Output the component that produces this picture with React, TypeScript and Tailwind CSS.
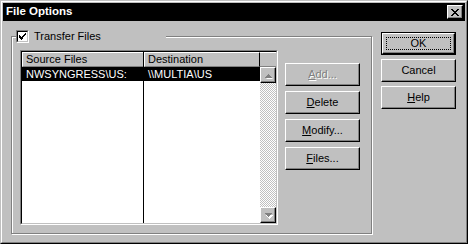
import React from "react";

// Win95-style "File Options" dialog

const raised =
  "border border-t-white border-l-white border-r-black border-b-black shadow-[inset_-1px_-1px_0_#808080]";

interface ButtonProps {
  children: React.ReactNode;
  isDefault?: boolean;
  disabled?: boolean;
}

const PushButton = ({ children, isDefault, disabled }: ButtonProps) => {
  if (isDefault) {
    return (
      <div className="w-[75px] h-[23px] border border-black">
        <div className={`h-full ${raised} p-[3px]`}>
          <div className="h-full border border-dotted border-black flex items-center justify-center">
            {children}
          </div>
        </div>
      </div>
    );
  }
  return (
    <div
      className={`w-[75px] h-[23px] ${raised} flex items-center justify-center ${
        disabled ? "text-[#808080] [text-shadow:1px_1px_0_#fff]" : ""
      }`}
    >
      {children}
    </div>
  );
};

const Arrow = ({ up }: { up?: boolean }) => (
  <svg width="7" height="5" viewBox="0 0 7 5" className="overflow-visible">
    {up ? (
      <>
        <path d="M1 5h6M2 4h4M3 3h2" stroke="#fff" strokeWidth="1" transform="translate(0.5 0.5)" />
        <path d="M0 4.5h7M1 3.5h5M2 2.5h3M3 1.5h1" stroke="#808080" strokeWidth="1" />
      </>
    ) : (
      <>
        <path d="M1 1.5h7M2 2.5h5M3 3.5h3M4 4.5h1" stroke="#fff" strokeWidth="1" transform="translate(0 1)" />
        <path d="M0 0.5h7M1 1.5h5M2 2.5h3M3 3.5h1" stroke="#808080" strokeWidth="1" />
      </>
    )}
  </svg>
);

const ScrollButton = ({ up }: { up?: boolean }) => (
  <div className={`w-[16px] h-[16px] bg-[#c0c0c0] ${raised} flex items-center justify-center`}>
    <Arrow up={up} />
  </div>
);

const Check = () => (
  <svg width="7" height="7" viewBox="0 0 7 7">
    <path d="M0 2.5h1M0 3.5h2M0 4.5h3M1 5.5h3M2 6.5h1M3 4.5h1M4 3.5h1M5 2.5h1M6 0.5h1M5 1.5h2M4 2.5h2M3 3.5h2M2 4.5h2" stroke="#000" strokeWidth="1" />
  </svg>
);

const App = () => {
  return (
    <div className="w-[468px] h-[244px] bg-[#c0c0c0] font-['Liberation_Sans',Arial,sans-serif] text-[11px] text-black leading-none">
      <div className="w-full h-full border border-t-[#c0c0c0] border-l-[#c0c0c0] border-r-black border-b-black">
        <div className="w-full h-full border border-t-white border-l-white border-r-[#808080] border-b-[#808080] p-[1px] flex flex-col">
          {/* Title bar */}
          <div className="h-[18px] bg-black text-white font-bold text-[11.5px] flex items-center justify-between pl-[3px] pr-[2px]">
            <span>File Options</span>
            <div className={`w-[16px] h-[14px] bg-[#c0c0c0] ${raised} flex items-center justify-center`}>
              <svg width="8" height="7" viewBox="0 0 8 7">
                <path d="M0 0.5h2M6 0.5h2M1 1.5h2M5 1.5h2M2 2.5h4M3 3.5h2M2 4.5h4M1 5.5h2M5 5.5h2M0 6.5h2M6 6.5h2" stroke="#000" strokeWidth="1" />
              </svg>
            </div>
          </div>

          {/* Body */}
          <div className="flex">
            {/* Group box */}
            <div className="relative ml-[8px] mt-[15px] w-[361px] h-[198px] border border-[#808080] shadow-[1px_1px_0_#fff,inset_1px_1px_0_#fff]">
              <div className="absolute left-[4px] -top-[7px] w-[150px] h-[13px] bg-[#c0c0c0] flex items-center">
                <div className="w-[13px] h-[13px] border border-t-[#808080] border-l-[#808080] border-r-white border-b-white">
                  <div className="w-full h-full bg-white border border-t-black border-l-black border-r-[#c0c0c0] border-b-[#c0c0c0] flex items-center justify-center">
                    <Check />
                  </div>
                </div>
                <span className="ml-[5px]">Transfer Files</span>
              </div>

              <div className="flex pl-[8px] pt-[13px]">
                {/* List view */}
                <div className="w-[258px] h-[175px] border border-t-[#808080] border-l-[#808080] border-r-white border-b-white">
                  <div className="h-full bg-white border border-t-black border-l-black border-r-[#c0c0c0] border-b-[#c0c0c0] flex">
                    <div className="w-[122px] border-r border-black flex flex-col">
                      <div className="h-[15px] bg-[#c0c0c0] border-t border-l border-t-white border-l-white border-b border-b-[#808080] flex items-center pl-[3px]">
                        Source Files
                      </div>
                      <div className="h-[14px] bg-black text-white flex items-center pl-[4px]">
                        NWSYNGRESS\US:
                      </div>
                    </div>
                    <div className="w-[116px] flex flex-col">
                      <div className="h-[15px] bg-[#c0c0c0] border-t border-l border-t-white border-l-white border-b border-b-[#808080] border-r border-r-black flex items-center pl-[3px]">
                        Destination
                      </div>
                      <div className="h-[14px] bg-black text-white flex items-center pl-[4px]">
                        \\MULTIA\US
                      </div>
                    </div>
                    {/* Scrollbar */}
                    <div className="w-[16px] flex flex-col">
                      <div className="h-[15px] bg-[#c0c0c0] border-t border-t-white border-b border-b-[#808080]" />
                      <ScrollButton up />
                      <div className="flex-1 bg-[image:repeating-conic-gradient(#c0c0c0_0_25%,#ffffff_0_50%)] bg-[length:2px_2px]" />
                      <ScrollButton />
                    </div>
                  </div>
                </div>

                {/* Side buttons */}
                <div className="ml-[7px] mt-[13px] flex flex-col gap-[5px]">
                  <PushButton disabled>
                    <span><u>A</u>dd...</span>
                  </PushButton>
                  <PushButton>
                    <span><u>D</u>elete</span>
                  </PushButton>
                  <PushButton>
                    <span><u>M</u>odify...</span>
                  </PushButton>
                  <PushButton>
                    <span><u>F</u>iles...</span>
                  </PushButton>
                </div>
              </div>
            </div>

            {/* Dialog buttons */}
            <div className="ml-[9px] mt-[11px] flex flex-col gap-[4px]">
              <PushButton isDefault>OK</PushButton>
              <PushButton>Cancel</PushButton>
              <PushButton>
                <span><u>H</u>elp</span>
              </PushButton>
            </div>
          </div>
        </div>
      </div>
    </div>
  );
};

export default App;
